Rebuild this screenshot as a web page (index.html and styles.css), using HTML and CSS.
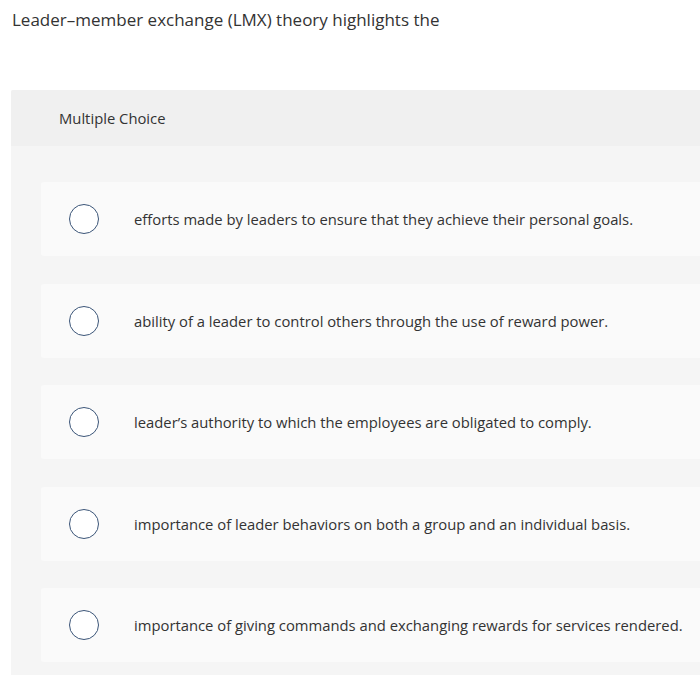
FILE: index.html
```
<!DOCTYPE html>
<html lang="en">
<head>
    <meta charset="UTF-8">
    <meta name="viewport" content="width=device-width, initial-scale=1.0">
    <title>Multiple Choice</title>
    <link rel="stylesheet" href="styles.css">
</head>
<body>

    <p class="question">Leader–member exchange (LMX) theory highlights the</p>

    <div class="panel">
        <div class="panel-header">Multiple Choice</div>
        <div class="choices">
            <label class="choice">
                <span class="radio"></span>
                <span class="choice-text">efforts made by leaders to ensure that they achieve their personal goals.</span>
            </label>
            <label class="choice">
                <span class="radio"></span>
                <span class="choice-text">ability of a leader to control others through the use of reward power.</span>
            </label>
            <label class="choice">
                <span class="radio"></span>
                <span class="choice-text">leader’s authority to which the employees are obligated to comply.</span>
            </label>
            <label class="choice">
                <span class="radio"></span>
                <span class="choice-text">importance of leader behaviors on both a group and an individual basis.</span>
            </label>
            <label class="choice">
                <span class="radio"></span>
                <span class="choice-text">importance of giving commands and exchanging rewards for services rendered.</span>
            </label>
        </div>
    </div>

</body>
</html>
```

FILE: styles.css
```
/* Page */
body {
    margin: 0;
    padding: 0;
    background-color: #fff;
    font-family: "Open Sans", "Liberation Sans", sans-serif;
    color: #333;
}

.question {
    margin: 0;
    padding: 10px 12px 0;
    font-size: 17px;
    line-height: 20px;
}

/* Question panel */
.panel {
    margin: 60px 0 0 11px;
    background-color: #f5f5f5;
    border-radius: 2px 0 0 0;
    padding-bottom: 20px;
}

.panel-header {
    display: flex;
    align-items: center;
    height: 56px;
    padding-left: 48px;
    background-color: #f0f0f0;
    font-size: 14.8px;
    border-radius: 2px 0 0 0;
}

.choices {
    display: flex;
    flex-direction: column;
    gap: 27.5px;
    padding: 36px 0 0 30px;
}

.choice {
    display: flex;
    align-items: center;
    height: 74px;
    padding-left: 28px;
    background-color: #fafafa;
    border-radius: 3px 0 0 3px;
    font-size: 14.8px;
    cursor: pointer;
}

.radio {
    flex: none;
    width: 28px;
    height: 28px;
    border: 1.5px solid #3b5578;
    border-radius: 50%;
    background-color: #fff;
    margin-right: 35px;
}
```
